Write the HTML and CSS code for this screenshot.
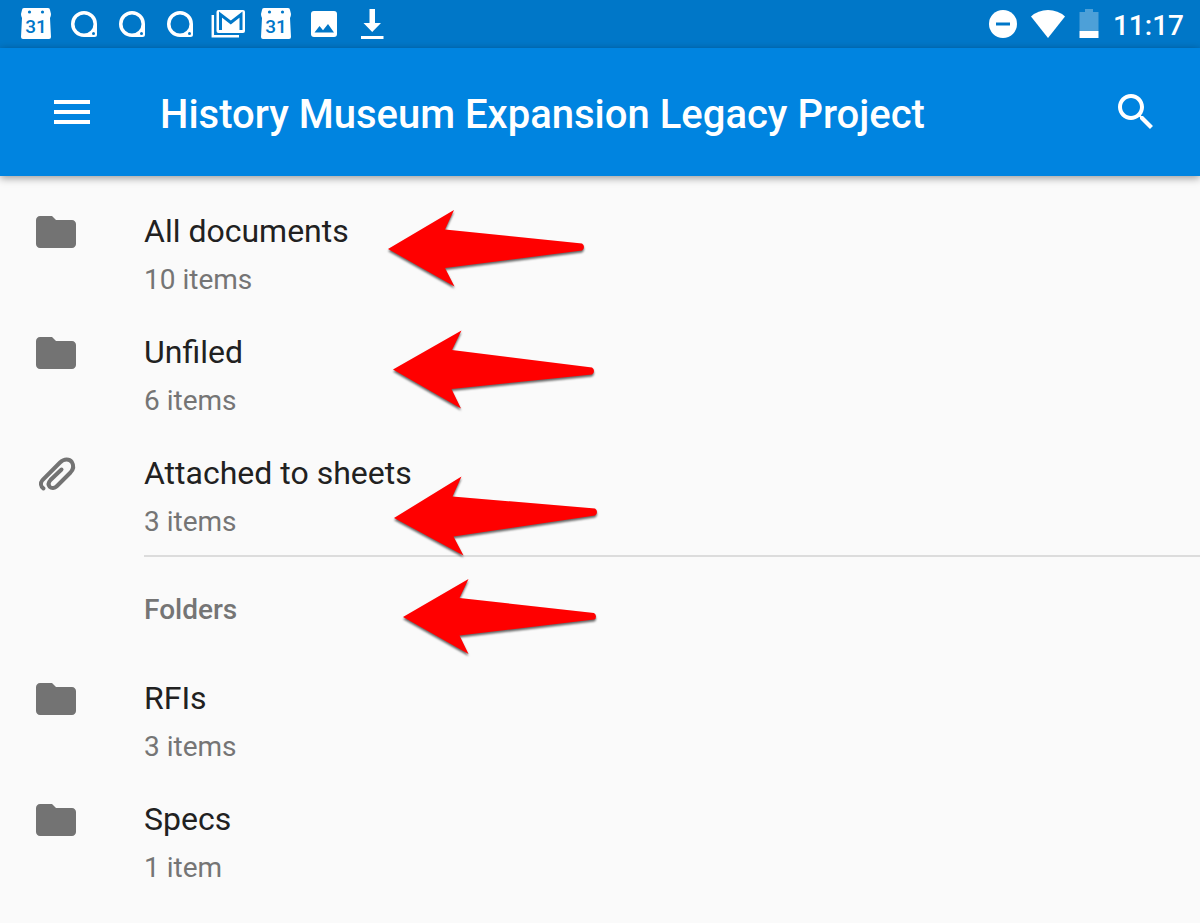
FILE: index.html
```html
<!DOCTYPE html>
<html lang="en">
<head>
    <meta charset="UTF-8">
    <meta name="viewport" content="width=device-width, initial-scale=1.0">
    <title>History Museum Expansion Legacy Project</title>
    <link rel="stylesheet" href="styles.css">
</head>
<body>
    <!-- shared icons -->
    <svg class="sprite" width="0" height="0" aria-hidden="true">
        <symbol id="lens" viewBox="0 0 48 48">
            <path fill="#fff" fill-rule="evenodd" d="M24 11a13 13 0 0 1 13 13v10.500a2.500 2.500 0 0 1-2.500 2.500H24a13 13 0 0 1 0-26zm0 3.500a9.500 9.500 0 1 0 0 19 9.500 9.500 0 0 0 0-19z"/>
            <circle class="hole" cx="33.500" cy="33.500" r="1.500"/>
        </symbol>
        <symbol id="folder" viewBox="0 0 24 24">
            <path d="M10 4H4c-1.100 0-1.990.9-1.990 2L2 18c0 1.100.9 2 2 2h16c1.100 0 2-.9 2-2V8c0-1.100-.9-2-2-2h-8l-2-2z"/>
        </symbol>
    </svg>

    <div class="status-bar">
        <div class="notifications">
            <svg viewBox="0 0 48 48">
                <path fill="#fff" d="M12 8h24q2 0 2 2l1 4q0 2-1 4l1 19q0 2-2 2H11q-2 0-2-2l1-19q-1-2-1-4l1-4q0-2 2-2z"/>
                <circle class="hole" cx="17.500" cy="12" r="1.600"/>
                <circle class="hole" cx="30.500" cy="12" r="1.600"/>
                <text class="hole day" x="24" y="33" text-anchor="middle">31</text>
            </svg>
            <svg><use href="#lens"/></svg>
            <svg><use href="#lens"/></svg>
            <svg><use href="#lens"/></svg>
            <svg viewBox="0 0 48 48">
                <path fill="none" stroke="#fff" stroke-width="2.500" d="M8.800 15v21.300H35"/>
                <rect fill="#fff" x="12.500" y="10" width="28.500" height="23" rx="2"/>
                <path fill="none" stroke="#0077c8" stroke-width="3" d="M16.500 30V14.500l10.300 8L37 14.500V30"/>
            </svg>
            <svg viewBox="0 0 48 48">
                <path fill="#fff" d="M12 8h24q2 0 2 2l1 4q0 2-1 4l1 19q0 2-2 2H11q-2 0-2-2l1-19q-1-2-1-4l1-4q0-2 2-2z"/>
                <circle class="hole" cx="17.500" cy="12" r="1.600"/>
                <circle class="hole" cx="30.500" cy="12" r="1.600"/>
                <text class="hole day" x="24" y="33" text-anchor="middle">31</text>
            </svg>
            <svg viewBox="0 0 48 48">
                <rect fill="#fff" x="11" y="11" width="26" height="26" rx="3"/>
                <path class="hole" d="M14.500 32.500l5-6.500 3.500 4.200 5-6.200 6 8.500z"/>
            </svg>
            <svg viewBox="0 0 48 48">
                <path fill="#fff" d="M21.500 9h5.500v14h6L24.200 32 15.500 23h6zM13 36h22.500v3H13z"/>
            </svg>
        </div>
        <div class="system">
            <svg class="dnd" viewBox="0 0 28 28">
                <circle fill="#fff" cx="14" cy="14" r="14"/>
                <path class="hole" d="M7 12.500h14v3H7z"/>
            </svg>
            <svg class="wifi" viewBox="0 0 34 28">
                <path fill="#fff" d="M17 28L0 6.500Q7 0 17 0t17 6.500z"/>
            </svg>
            <svg class="battery" viewBox="0 0 20 30">
                <path fill="#fff" fill-opacity=".3" d="M6 0h8v3h5.500v19H.5V3H6z"/>
                <path fill="#fff" d="M.5 22h19v7H.5z"/>
            </svg>
            <span class="clock">11:17</span>
        </div>
    </div>

    <header class="app-bar">
        <button type="button" class="icon-button" aria-label="Menu">
            <svg viewBox="0 0 24 24"><path d="M3 18h18v-2H3v2zm0-5h18v-2H3v2zm0-7v2h18V6H3z"/></svg>
        </button>
        <h1>History Museum Expansion Legacy Project</h1>
        <button type="button" class="icon-button" aria-label="Search">
            <svg viewBox="0 0 24 24"><path d="M15.500 14h-.79l-.28-.27C15.410 12.590 16 11.110 16 9.500 16 5.910 13.090 3 9.500 3S3 5.910 3 9.500 5.910 16 9.500 16c1.610 0 3.090-.59 4.230-1.570l.27.28v.79l5 4.990L20.490 19l-4.990-5zm-6 0C7.010 14 5 11.990 5 9.500S7.010 5 9.500 5 14 7.010 14 9.500 11.990 14 9.500 14z"/></svg>
        </button>
    </header>

    <main>
        <ul class="list">
            <li>
                <a href="#all" class="row">
                    <svg><use href="#folder"/></svg>
                    <span class="name">All documents</span>
                    <span class="count">10 items</span>
                </a>
            </li>
            <li>
                <a href="#unfiled" class="row">
                    <svg><use href="#folder"/></svg>
                    <span class="name">Unfiled</span>
                    <span class="count">6 items</span>
                </a>
            </li>
            <li>
                <a href="#attached" class="row">
                    <svg viewBox="0 0 48 48"><path class="clip" d="M11.500 38.500C8.500 36.500 8 33 10.500 30L28 12.500C32.500 8.200 37.500 9 39.800 12C42 15.500 41.200 19.500 38.500 22.500L25 36C22.500 38.500 19.500 38.500 17.800 36.800C16 34.800 16.500 32.200 18.500 30L29.500 19.500"/></svg>
                    <span class="name">Attached to sheets</span>
                    <span class="count">3 items</span>
                </a>
            </li>
        </ul>

        <h2>Folders</h2>

        <ul class="list">
            <li>
                <a href="#rfis" class="row">
                    <svg><use href="#folder"/></svg>
                    <span class="name">RFIs</span>
                    <span class="count">3 items</span>
                </a>
            </li>
            <li>
                <a href="#specs" class="row">
                    <svg><use href="#folder"/></svg>
                    <span class="name">Specs</span>
                    <span class="count">1 item</span>
                </a>
            </li>
        </ul>

        <!-- callout arrows over the list -->
        <svg class="arrows" viewBox="380 200 230 470" aria-hidden="true">
            <path d="M388 249L454 210l-9 19.500 137 14q2 1 2 3.500t-2 3.500L445 268l9.500 18.500z"/>
            <path d="M393 369.500L461.500 330.500l-9.500 19.500 140 17.500q2 1 2 3.500t-2 3.500L451.500 389l9.500 19.500z"/>
            <path d="M394 518L461.500 476.500l-9 20 142.500 12q2 1 2 3.500t-2 3.500L453.500 536.500l10 19z"/>
            <path d="M403 617L468.500 579l-9 19 134.500 15q2 1 2 3.500t-2 3L459.500 635.500l9 18.500z"/>
        </svg>
    </main>
</body>
</html>
```
FILE: styles.css
```css
* {
    box-sizing: border-box;
}

body {
    margin: 0;
    background-color: #fafafa;
    color: #212121;
    font-family: Roboto, sans-serif;
}

h1, h2, ul {
    margin: 0;
    padding: 0;
}

.sprite {
    position: absolute;
}

/* Status bar */
.status-bar {
    display: flex;
    justify-content: space-between;
    height: 48px;
    padding: 0 16px 0 12px;
    background-color: #0077c8;
    color: #fff;
}

.notifications,
.system {
    display: flex;
    align-items: center;
}

.notifications svg {
    width: 48px;
    height: 48px;
}

.hole {
    fill: #0077c8;
}

.day {
    font-size: 19px;
    font-weight: 500;
}

.system {
    gap: 14px;
}

.dnd {
    width: 28px;
    height: 28px;
}

.wifi {
    width: 34px;
    height: 28px;
}

.battery {
    width: 20px;
    height: 30px;
}

.clock {
    padding-top: 4px;
    font-size: 28px;
    font-weight: 500;
    line-height: 44px;
}

/* App bar */
.app-bar {
    position: relative;
    display: flex;
    align-items: center;
    height: 128px;
    padding: 0 40px 0 48px;
    background-color: #0084e0;
    color: #fff;
    box-shadow: 0 2px 8px rgba(0, 0, 0, 0.4);
}

.app-bar h1 {
    flex: 1;
    margin-left: 64px;
    padding-top: 6px;
    font-size: 40px;
    font-weight: 500;
    line-height: 48px;
}

.icon-button {
    width: 48px;
    height: 48px;
    padding: 0;
    border: none;
    background: none;
    cursor: pointer;
}

.icon-button svg {
    display: block;
    fill: #fff;
}

/* Document list */
main {
    position: relative;
    padding-top: 16px;
}

.list {
    list-style: none;
}

.row {
    display: grid;
    grid-template-columns: 48px 1fr;
    column-gap: 64px;
    padding: 16px 32px 7px;
    color: inherit;
    text-decoration: none;
}

.row svg {
    width: 48px;
    height: 48px;
    grid-row: span 2;
    fill: #737373;
}

.row .clip {
    fill: none;
    stroke: #737373;
    stroke-width: 4;
    stroke-linecap: round;
}

.name {
    font-size: 32px;
    line-height: 46px;
}

.count {
    color: #757575;
    font-size: 28px;
    line-height: 52px;
}

h2 {
    margin-left: 144px;
    padding-top: 4px;
    border-top: 2px solid #dcdcdc;
    color: #757575;
    font-size: 28px;
    font-weight: 500;
    line-height: 98px;
}

.arrows {
    position: absolute;
    top: 24px;
    left: 380px;
    width: 230px;
    height: 470px;
    fill: #f00;
    filter: drop-shadow(0 2px 1px rgba(0, 0, 0, 0.6));
    pointer-events: none;
}
```
